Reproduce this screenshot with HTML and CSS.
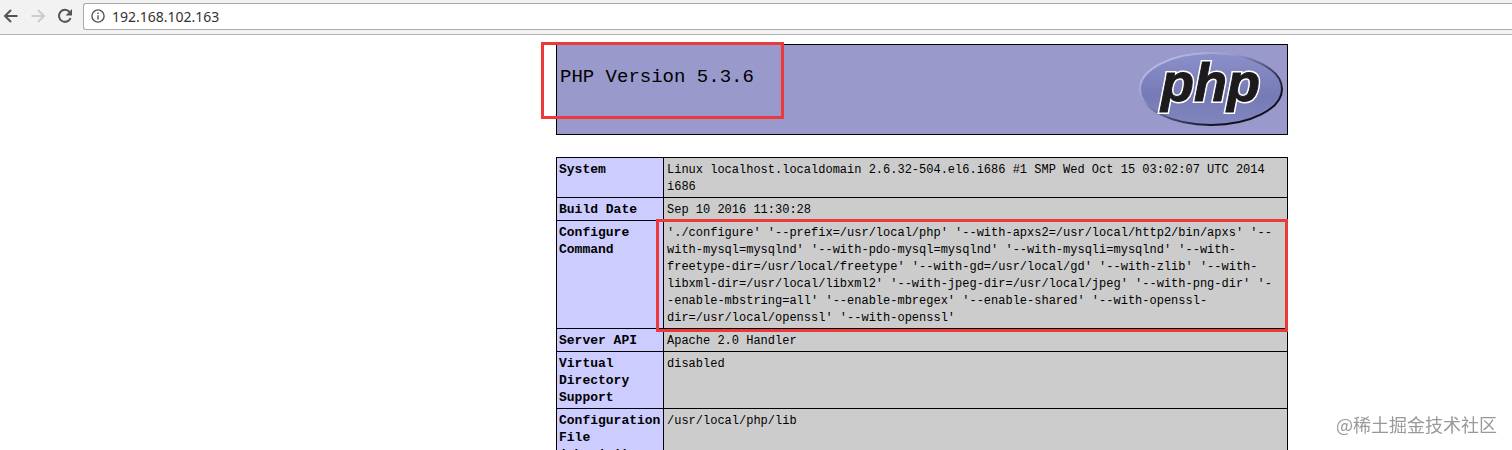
FILE: index.html
```
<!DOCTYPE html>
<html lang="en">
<head>
  <meta charset="UTF-8">
  <meta name="viewport" content="width=device-width, initial-scale=1.0">
  <title>phpinfo()</title>
  <link rel="stylesheet" href="styles.css">
</head>
<body>
  <header class="toolbar">
    <button class="nav-btn" type="button" aria-label="Back">
      <svg width="16" height="16" viewBox="0 0 16 16"><path d="M14.5 8H2M8 2 2 8l6 6"/></svg>
    </button>
    <button class="nav-btn" type="button" aria-label="Forward" disabled>
      <svg width="16" height="16" viewBox="0 0 16 16"><path d="M1.5 8H14M8 2l6 6-6 6"/></svg>
    </button>
    <button class="nav-btn" type="button" aria-label="Reload">
      <svg width="16" height="16" viewBox="0 0 16 16"><path d="M13.6 10A6 6 0 1 1 12.6 4"/><path class="solid" d="M15 1v6.4H8.6z"/></svg>
    </button>
    <div class="address">
      <svg width="14" height="14" viewBox="0 0 14 14"><circle cx="7" cy="7" r="6.1"/><path d="M7 6.2v4.3M7 3.4v1.6"/></svg>
      <input type="text" value="192.168.102.163" aria-label="Address">
    </div>
  </header>

  <main class="info">
    <section class="banner">
      <h1>PHP Version 5.3.6</h1>
      <svg class="logo" width="146" height="78" viewBox="0 0 146 78" role="img" aria-label="PHP logo">
        <defs>
          <linearGradient id="fill" x1="0" y1="0" x2="0" y2="1">
            <stop offset="0" stop-color="#8b8fca"/>
            <stop offset="0.6" stop-color="#777bb5"/>
            <stop offset="1" stop-color="#8286c0"/>
          </linearGradient>
          <linearGradient id="rim" x1="0.1" y1="0" x2="0.9" y2="0.8">
            <stop offset="0" stop-color="#c4c7ea"/>
            <stop offset="0.35" stop-color="#9a9dd0"/>
            <stop offset="0.65" stop-color="#45486f"/>
            <stop offset="0.9" stop-color="#10111c"/>
          </linearGradient>
        </defs>
        <ellipse cx="73" cy="38" rx="71" ry="36" fill="url(#fill)" stroke="url(#rim)" stroke-width="2"/>
        <text class="logo-edge" x="23" y="50">php</text>
        <text class="logo-face" x="23" y="50">php</text>
      </svg>
      <div class="mark mark-version"></div>
    </section>

    <table>
      <tbody>
        <tr>
          <th scope="row">System</th>
          <td>Linux localhost.localdomain 2.6.32-504.el6.i686 #1 SMP Wed Oct 15 03:02:07 UTC 2014<br>i686</td>
        </tr>
        <tr>
          <th scope="row">Build Date</th>
          <td>Sep 10 2016 11:30:28</td>
        </tr>
        <tr>
          <th scope="row">Configure Command</th>
          <td class="command">
            './configure' '--prefix=/usr/local/php' '--with-apxs2=/usr/local/http2/bin/apxs' '--<br>
            with-mysql=mysqlnd' '--with-pdo-mysql=mysqlnd' '--with-mysqli=mysqlnd' '--with-<br>
            freetype-dir=/usr/local/freetype' '--with-gd=/usr/local/gd' '--with-zlib' '--with-<br>
            libxml-dir=/usr/local/libxml2' '--with-jpeg-dir=/usr/local/jpeg' '--with-png-dir' '-<br>
            -enable-mbstring=all' '--enable-mbregex' '--enable-shared' '--with-openssl-<br>
            dir=/usr/local/openssl' '--with-openssl'
            <div class="mark mark-command"></div>
          </td>
        </tr>
        <tr>
          <th scope="row">Server API</th>
          <td>Apache 2.0 Handler</td>
        </tr>
        <tr>
          <th scope="row">Virtual Directory Support</th>
          <td>disabled</td>
        </tr>
        <tr>
          <th scope="row">Configuration File (php.ini) Path</th>
          <td>/usr/local/php/lib</td>
        </tr>
      </tbody>
    </table>
  </main>

  <div class="watermark">@稀土掘金技术社区</div>
</body>
</html>
```
FILE: styles.css
```
* {
  box-sizing: border-box;
  margin: 0;
  padding: 0;
}

body {
  height: 100vh;
  overflow: hidden;
  background: #fff;
  color: #000;
  font-family: "Liberation Mono", monospace;
  font-size: 12px;
  line-height: 17px;
}

/* browser bar */
.toolbar {
  display: flex;
  align-items: center;
  gap: 11px;
  height: 35px;
  padding: 0 0 2px 3px;
  background: #f2f2f2;
  border-bottom: 1px solid #b4b4b4;
}

.nav-btn {
  display: flex;
  border: 0;
  background: none;
}

.nav-btn svg,
.address svg {
  fill: none;
  stroke: #555;
  stroke-width: 2;
}

.nav-btn:disabled svg {
  stroke: #ccc;
}

.nav-btn .solid {
  fill: #555;
  stroke: none;
}

.address {
  display: flex;
  flex: 1;
  align-items: center;
  gap: 7px;
  height: 27px;
  margin-left: -1px;
  padding-left: 7px;
  background: #fff;
  border: 1px solid #aaa;
  border-right: 0;
  border-radius: 3px 0 0 3px;
}

.address svg {
  stroke-width: 1.4;
}

.address input {
  flex: 1;
  border: 0;
  outline: 0;
  background: none;
  color: #333;
  font-family: "Noto Sans", sans-serif;
  font-size: 14px;
}

/* phpinfo page */
.info {
  width: 732px;
  margin: 9px 224px 0 auto;
}

.banner {
  position: relative;
  display: flex;
  justify-content: space-between;
  align-items: flex-start;
  height: 91px;
  margin-bottom: 22px;
  padding: 6px 3px;
  background: #9999cc;
  border: 1px solid #000;
}

.banner h1 {
  padding-top: 14px;
  font-size: 19px;
  font-weight: normal;
  line-height: 24px;
}

.logo text {
  font: italic bold 54px "Liberation Sans", sans-serif;
}

.logo-edge {
  fill: #fff;
  stroke: #fff;
  stroke-width: 4;
}

.logo-face {
  fill: #1c1a1c;
  stroke: #1c1a1c;
  stroke-width: 1;
}

table {
  width: 100%;
  border-collapse: collapse;
}

th,
td {
  border: 1px solid #000;
  text-align: left;
  vertical-align: top;
}

th {
  width: 107px;
  padding: 3px 2px 2px;
  background: #ccccff;
  font-size: 13px;
}

td {
  padding: 4px 3px 1px;
  background: #cccccc;
}

.command {
  position: relative;
  white-space: nowrap;
}

/* red highlight frames */
.mark {
  position: absolute;
  border: 3px solid #ec3a3a;
}

.mark-version {
  top: -3px;
  left: -16px;
  width: 243px;
  height: 77px;
}

.mark-command {
  inset: -2px -1px -4px -8px;
}

.watermark {
  position: fixed;
  right: 15px;
  bottom: 13px;
  color: #999;
  font-family: "Noto Sans CJK SC", sans-serif;
  font-size: 18px;
  line-height: 26px;
}
```
